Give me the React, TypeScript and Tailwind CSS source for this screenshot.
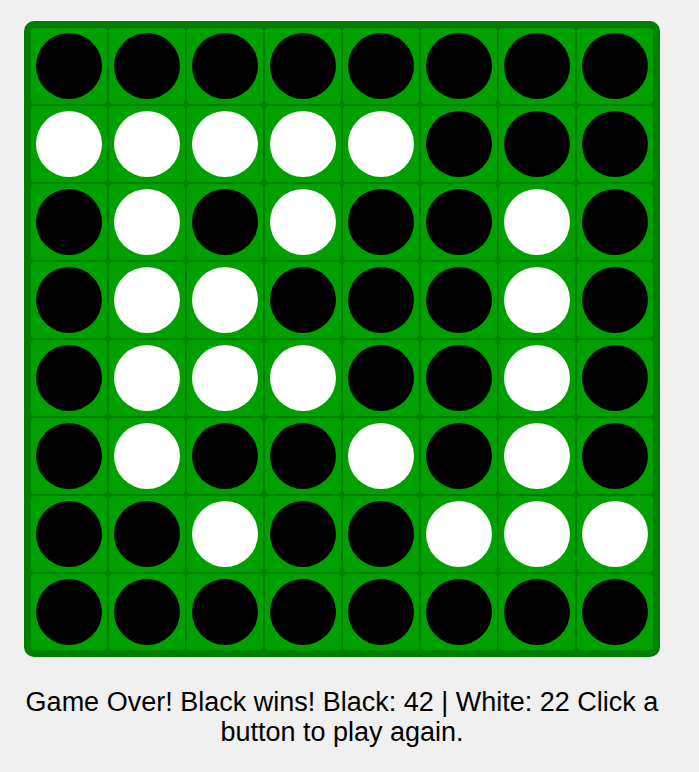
const B = 1, W = 2;

// final position, row by row: 1 = black, 2 = white
const BOARD: number[][] = [
  [B, B, B, B, B, B, B, B],
  [W, W, W, W, W, B, B, B],
  [B, W, B, W, B, B, W, B],
  [B, W, W, B, B, B, W, B],
  [B, W, W, W, B, B, W, B],
  [B, W, B, B, W, B, W, B],
  [B, B, W, B, B, W, W, W],
  [B, B, B, B, B, B, B, B],
];

function Cell({ v }: { v: number }) {
  return (
    <div className="w-[76px] h-[76px] rounded-[4px] bg-[#00a000] flex items-center justify-center">
      {v === B && <div className="w-[66px] h-[66px] rounded-full bg-black" />}
      {v === W && <div className="w-[66px] h-[66px] rounded-full bg-white" />}
    </div>
  );
}

export default function App() {
  const flat = BOARD.flat();
  const black = flat.filter((v) => v === B).length;
  const white = flat.filter((v) => v === W).length;

  return (
    <div className="min-h-screen bg-[#f0f0f0] pt-[21px] pl-[24px] font-['Liberation_Sans',Arial,sans-serif]">
      <div className="w-[636px]">
        <div className="grid grid-cols-8 gap-[2px] p-[7px] bg-[#008000] rounded-[10px] w-[636px]">
          {flat.map((v, i) => (
            <Cell key={i} v={v} />
          ))}
        </div>
        <p className="mt-[30px] text-center text-[27px] leading-[30px] text-black">
          Game Over! Black wins! Black: {black} | White: {white} Click a button to play again.
        </p>
      </div>
    </div>
  );
}
